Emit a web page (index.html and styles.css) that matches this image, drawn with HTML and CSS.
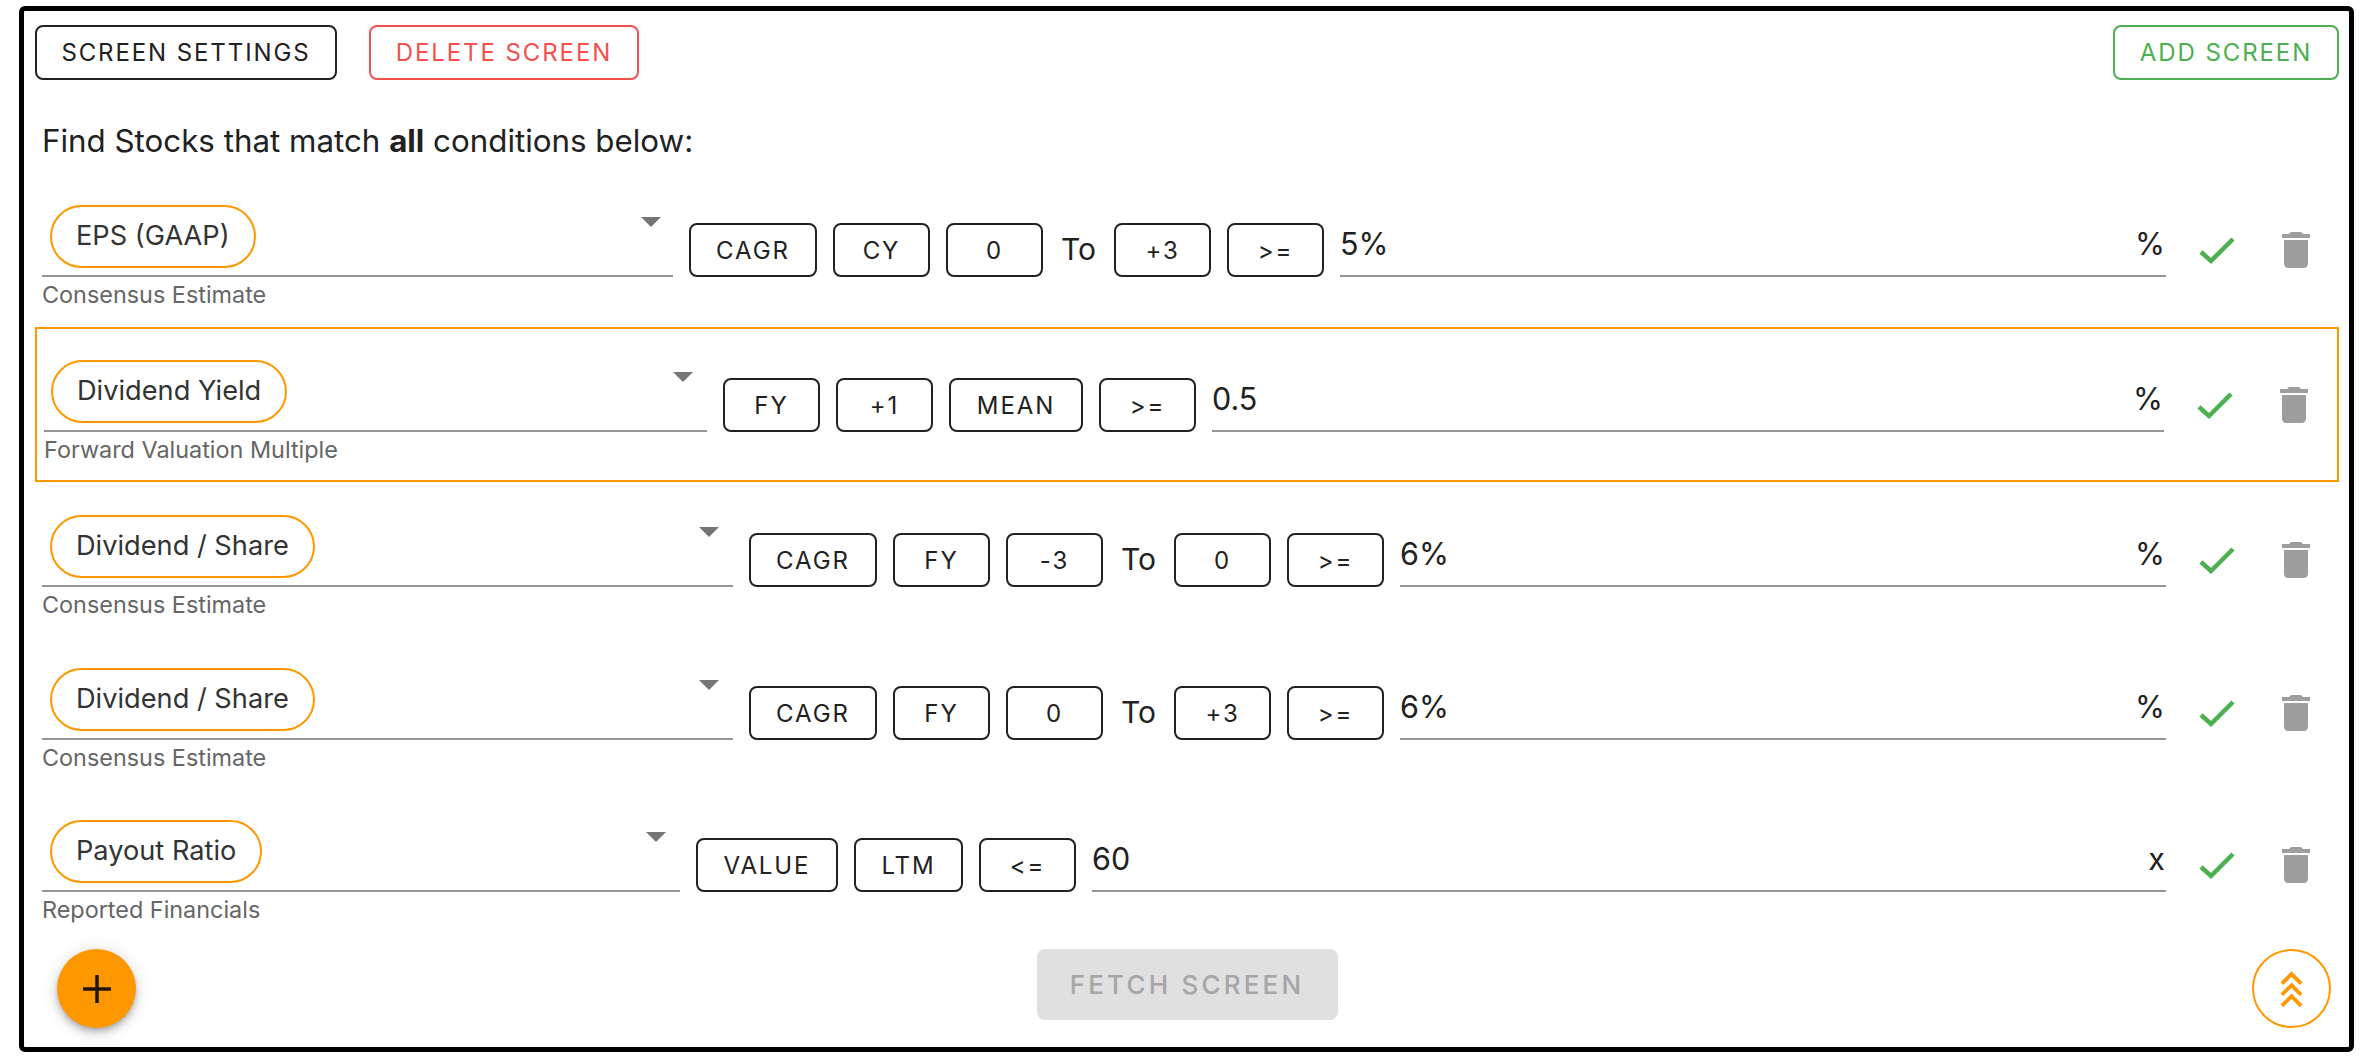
FILE: index.html
```html
<!DOCTYPE html>
<html lang="en">
<head>
<meta charset="utf-8">
<title>Stock Screen</title>
<link rel="stylesheet" href="styles.css">
</head>
<body>
<main class="frame">
  <div class="toolbar">
    <button class="btn btn-dark">SCREEN SETTINGS</button>
    <button class="btn btn-red">DELETE SCREEN</button>
    <button class="btn btn-green push">ADD SCREEN</button>
  </div>
  <p class="intro">Find Stocks that match <b>all</b> conditions below:</p>

  <section class="row">
    <div class="field w1">
      <div class="select"><span class="chip">EPS (GAAP)</span><i class="caret"></i></div>
      <div class="help">Consensus Estimate</div>
    </div>
    <button class="tag t-cagr">CAGR</button><button class="tag">CY</button><button class="tag">0</button>
    <span class="to">To</span>
    <button class="tag">+3</button><button class="tag">&gt;=</button>
    <div class="value"><span>5%</span><span>%</span></div>
    <svg class="ico check" viewBox="0 0 48 48"><path d="M8 26l10 9L40 13"/></svg>
    <svg class="ico trash" viewBox="0 0 24 24"><path d="M6 19c0 1.1.9 2 2 2h8c1.1 0 2-.9 2-2V7H6v12zM19 4h-3.5l-1-1h-5l-1 1H5v2h14V4z"/></svg>
  </section>

  <section class="row active">
    <div class="field w2">
      <div class="select"><span class="chip">Dividend Yield</span><i class="caret"></i></div>
      <div class="help">Forward Valuation Multiple</div>
    </div>
    <button class="tag">FY</button><button class="tag">+1</button><button class="tag t-mean">MEAN</button><button class="tag">&gt;=</button>
    <div class="value"><span>0.5</span><span>%</span></div>
    <svg class="ico check" viewBox="0 0 48 48"><path d="M8 26l10 9L40 13"/></svg>
    <svg class="ico trash" viewBox="0 0 24 24"><path d="M6 19c0 1.1.9 2 2 2h8c1.1 0 2-.9 2-2V7H6v12zM19 4h-3.5l-1-1h-5l-1 1H5v2h14V4z"/></svg>
  </section>

  <section class="row after-active">
    <div class="field w3">
      <div class="select"><span class="chip">Dividend / Share</span><i class="caret"></i></div>
      <div class="help">Consensus Estimate</div>
    </div>
    <button class="tag t-cagr">CAGR</button><button class="tag">FY</button><button class="tag">-3</button>
    <span class="to">To</span>
    <button class="tag">0</button><button class="tag">&gt;=</button>
    <div class="value"><span>6%</span><span>%</span></div>
    <svg class="ico check" viewBox="0 0 48 48"><path d="M8 26l10 9L40 13"/></svg>
    <svg class="ico trash" viewBox="0 0 24 24"><path d="M6 19c0 1.1.9 2 2 2h8c1.1 0 2-.9 2-2V7H6v12zM19 4h-3.5l-1-1h-5l-1 1H5v2h14V4z"/></svg>
  </section>

  <section class="row">
    <div class="field w3">
      <div class="select"><span class="chip">Dividend / Share</span><i class="caret"></i></div>
      <div class="help">Consensus Estimate</div>
    </div>
    <button class="tag t-cagr">CAGR</button><button class="tag">FY</button><button class="tag">0</button>
    <span class="to">To</span>
    <button class="tag">+3</button><button class="tag">&gt;=</button>
    <div class="value"><span>6%</span><span>%</span></div>
    <svg class="ico check" viewBox="0 0 48 48"><path d="M8 26l10 9L40 13"/></svg>
    <svg class="ico trash" viewBox="0 0 24 24"><path d="M6 19c0 1.1.9 2 2 2h8c1.1 0 2-.9 2-2V7H6v12zM19 4h-3.5l-1-1h-5l-1 1H5v2h14V4z"/></svg>
  </section>

  <section class="row last">
    <div class="field w5">
      <div class="select"><span class="chip">Payout Ratio</span><i class="caret"></i></div>
      <div class="help">Reported Financials</div>
    </div>
    <button class="tag t-value">VALUE</button><button class="tag t-ltm">LTM</button><button class="tag">&lt;=</button>
    <div class="value"><span>60</span><span>x</span></div>
    <svg class="ico check" viewBox="0 0 48 48"><path d="M8 26l10 9L40 13"/></svg>
    <svg class="ico trash" viewBox="0 0 24 24"><path d="M6 19c0 1.1.9 2 2 2h8c1.1 0 2-.9 2-2V7H6v12zM19 4h-3.5l-1-1h-5l-1 1H5v2h14V4z"/></svg>
  </section>

  <div class="footer">
    <button class="fab" aria-label="Add condition"><svg viewBox="0 0 48 48"><path d="M24 10v28M10 24h28"/></svg></button>
    <button class="fetch">FETCH SCREEN</button>
    <button class="up" aria-label="Scroll to top"><svg viewBox="0 0 78 78"><path d="M29 34l10-10 10 10M29 45.500l10-10 10 10M29 57l10-10 10 10"/></svg></button>
  </div>
</main>
</body>
</html>
```
FILE: styles.css
```css
* { box-sizing: border-box; }
html, body { margin: 0; padding: 0; background: #fff; }
body { font-family: Inter, "Liberation Sans", sans-serif; color: #212121; }
button { font-family: inherit; background: none; cursor: pointer; }

.frame {
  width: 2335px;
  height: 1046px;
  margin: 6px 0 0 19px;
  border: 5px solid #000;
  border-radius: 6px;
  padding: 14px 10px 0 11px;
}

.toolbar { display: flex; gap: 32px; }
.push { margin-left: auto; }
.btn {
  height: 55px;
  padding: 0 20px;
  border: 2px solid;
  border-radius: 8px;
  font-size: 24px;
  font-weight: 400;
  letter-spacing: 1.9px;
}
.btn-dark { color: #212121; border-color: #212121; width: 302px; }
.btn-red { color: #f44f4f; border-color: #f44f4f; width: 270px; }
.btn-green { color: #4caf50; border-color: #4caf50; width: 226px; }

.intro { margin: 44px 0 0 7px; height: 50px; font-size: 31.300px; line-height: 34px; }
.intro b { font-weight: 700; }

.row {
  display: flex;
  align-items: flex-start;
  gap: 16px;
  height: 153px;
  padding: 31px 19px 0 7px;
}
.row.active { height: 155px; border: 2px solid #ff9800; }
.row.after-active { margin-top: 2px; }
.row.last { margin-top: -1px; }

.field { flex: none; }
.w1 { width: 631px; }
.w2 { width: 663px; }
.w3 { width: 691px; }
.w5 { width: 638px; }
.select {
  display: flex;
  justify-content: space-between;
  align-items: flex-start;
  height: 72px;
  padding-left: 8px;
  padding-right: 14px;
  border-bottom: 2px solid #949494;
}
.w1 .select { padding-right: 12px; }
.active .select { padding-left: 7px; }
.chip {
  display: flex;
  align-items: center;
  height: 63px;
  padding: 0 24px 2px;
  border: 2px solid #ff9800;
  border-radius: 32px;
  font-size: 27.200px;
  color: #333;
}
.caret {
  margin-top: 12px;
  width: 0;
  height: 0;
  border-left: 10px solid transparent;
  border-right: 10px solid transparent;
  border-top: 10px solid #757575;
}
.help { margin-top: 5px; font-size: 23.400px; line-height: 26px; color: #666; }

.tag {
  flex: none;
  width: 97px;
  height: 54px;
  margin-top: 18px;
  padding: 0;
  border: 2px solid #212121;
  border-radius: 8px;
  font-size: 24px;
  letter-spacing: 1.900px;
  color: #212121;
}
.t-cagr { width: 128px; }
.t-mean { width: 134px; }
.t-value { width: 142px; }
.t-ltm { width: 109px; }

.to { flex: none; width: 39px; margin-top: 24px; text-align: center; font-size: 30px; line-height: 40px; }

.value {
  flex: 1;
  min-width: 0;
  display: flex;
  justify-content: space-between;
  align-items: center;
  height: 72px;
  padding-top: 7px;
  padding-right: 1px;
  border-bottom: 2px solid #949494;
  font-size: 30.500px;
}

.ico { flex: none; width: 48px; height: 48px; margin-top: 21px; }
.check { margin-left: 11px; }
.check path { fill: none; stroke: #4caf50; stroke-width: 4.500; }
.trash { margin-left: 15px; }
.trash path { fill: #9e9e9e; }

.footer {
  display: grid;
  grid-template-columns: 1fr auto 1fr;
  align-items: start;
  margin-top: 7px;
  padding: 0 8px;
}
.fab {
  justify-self: start;
  width: 79px;
  height: 79px;
  margin-left: 14px;
  padding: 0;
  border: 0;
  border-radius: 50%;
  background: #ff9800;
  display: flex;
  align-items: center;
  justify-content: center;
  box-shadow: 0 3px 5px -1px rgba(0,0,0,.2), 0 6px 10px 0 rgba(0,0,0,.14), 0 1px 18px 0 rgba(0,0,0,.12);
}
.fab svg { width: 48px; height: 48px; }
.fab path { fill: none; stroke: rgba(0,0,0,.87); stroke-width: 3.500; }
.fetch {
  width: 301px;
  height: 71px;
  padding: 0;
  border: 0;
  border-radius: 8px;
  background: #e0e0e0;
  color: #a6a6a6;
  font-size: 26px;
  font-weight: 500;
  letter-spacing: 3.200px;
}
.up {
  justify-self: end;
  width: 79px;
  height: 79px;
  padding: 0;
  border: 2px solid #ff9800;
  border-radius: 50%;
}
.up svg { display: block; width: 75px; height: 75px; }
.up path { fill: none; stroke: #ff9800; stroke-width: 4; }
```
